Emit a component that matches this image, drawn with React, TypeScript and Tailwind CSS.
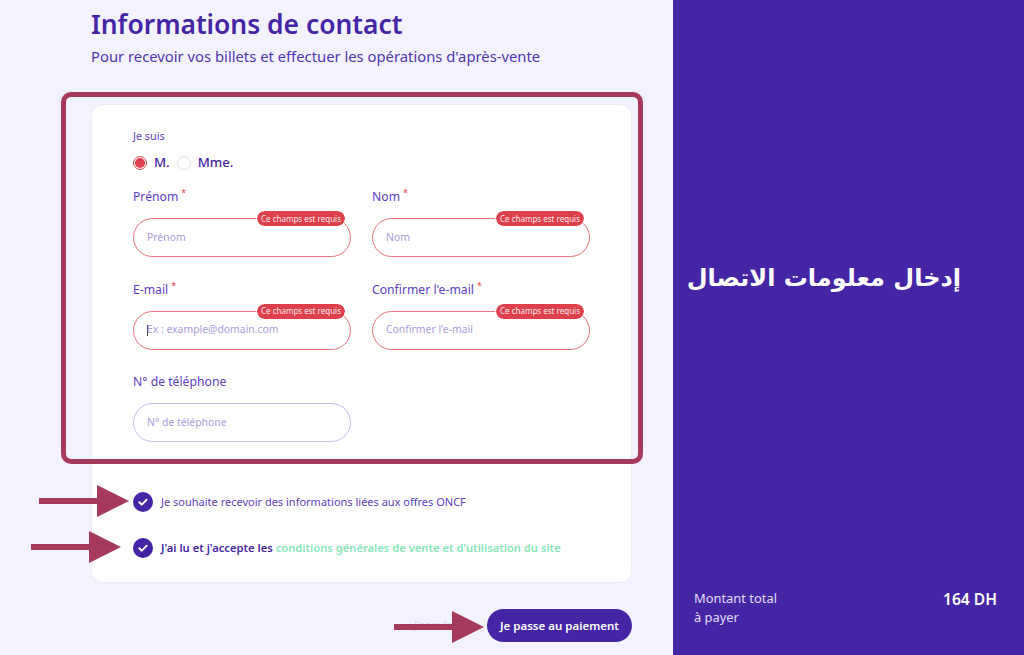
import React from "react";

const FONT = "font-['Noto_Sans',sans-serif]";

function Req() {
  return <span className="relative -top-[5px] ml-[3px] text-[9px] text-[#e0434f]">*</span>;
}

function Field({ label, placeholder, required, cursor }: { label: string; placeholder: string; required?: boolean; cursor?: boolean }) {
  return (
    <div className="w-[218px]">
      <div className="h-[20px] text-[12.2px] leading-[20px] text-[#5f3dc4]">
        {label}
        {required && <Req />}
      </div>
      <div className={`relative mt-[11px] flex h-[39px] items-center rounded-[20px] border-[1.5px] bg-white pl-[13px] text-[10.4px] text-[#a99be0] ${required ? "border-[#e8737b]" : "border-[#c5bcec]"}`}>
        {cursor && <span className="mr-[-1px] h-[11px] w-px bg-[#444]" />}
        {placeholder}
        {required && (
          <span className="absolute -top-[8px] right-[5px] flex h-[15px] items-center rounded-[8px] bg-[#dd3f4b] px-[4px] text-[8px] whitespace-nowrap text-[#fde8e9] outline-1 outline-white">
            Ce champs est requis
          </span>
        )}
      </div>
    </div>
  );
}

function Check({ children }: { children: React.ReactNode }) {
  return (
    <div className="flex h-[20px] items-center gap-[7px] text-[11.2px] whitespace-nowrap">
      <svg width="20" height="20" viewBox="0 0 20 20" className="shrink-0">
        <circle cx="10" cy="10" r="10" fill="#4525a5" />
        <path d="M6.3 10.2l2.6 2.5 4.8-5" fill="none" stroke="#fff" strokeWidth="1.9" strokeLinecap="round" strokeLinejoin="round" />
      </svg>
      {children}
    </div>
  );
}

function Arrow({ className }: { className: string }) {
  return (
    <svg width="90" height="34" viewBox="0 0 90 34" className={`absolute ${className}`}>
      <path d="M0 14H58V1L90 17L58 33V20H0Z" fill="#a63a5c" />
    </svg>
  );
}

export default function App() {
  return (
    <div className={`${FONT} flex h-[655px] w-[1024px] overflow-hidden bg-[#f4f2fe]`}>
      <main className="relative w-[673px] shrink-0 pt-[7px] pl-[91px]">
        <h1 className="text-[26.4px] leading-[34px] font-semibold text-[#4525a5]">Informations de contact</h1>
        <p className="mt-[5px] text-[14.8px] leading-[20px] text-[#5035b0]">Pour recevoir vos billets et effectuer les opérations d'après-vente</p>

        <section className="mt-[38px] h-[479px] w-[541px] rounded-[12px] border border-[#ecebf5] bg-white pt-[24px] pl-[41px]">
          <div className="text-[10.8px] leading-[14px] text-[#5f3dc4]">Je suis</div>
          <div className="mt-[11px] flex h-[18px] items-center text-[13.2px] font-medium text-[#4525a5]">
            <span className="flex h-[14px] w-[14px] items-center justify-center rounded-full border border-[#e0434f]">
              <span className="h-[10px] w-[10px] rounded-full bg-[#e0434f]" />
            </span>
            <span className="ml-[7px]">M.</span>
            <span className="ml-[7px] h-[14px] w-[14px] rounded-full border border-[#dedde8]" />
            <span className="ml-[7px]">Mme.</span>
          </div>

          <div className="mt-[15px] grid w-[456px] grid-cols-[218px_217px] gap-x-[21px] gap-y-[22.5px]">
            <Field label="Prénom" placeholder="Prénom" required />
            <Field label="Nom" placeholder="Nom" required />
            <Field label="E-mail" placeholder="Ex : example@domain.com" required cursor />
            <Field label="Confirmer l'e-mail" placeholder="Confirmer l'e-mail" required />
            <Field label="N° de téléphone" placeholder="N° de téléphone" />
          </div>

          <div className="mt-[50px] flex flex-col gap-[26px]">
            <Check><span className="ml-px text-[11px] text-[#5f3dc4]">Je souhaite recevoir des informations liées aux offres ONCF</span></Check>
            <Check>
              <span className="ml-px font-semibold text-[#4525a5]">J'ai lu et j'accepte les</span>
              <span className="-ml-[4px] font-semibold text-[#86e6b8]">conditions générales de vente et d'utilisation du site</span>
            </Check>
          </div>
        </section>

        <div className="mt-[26px] flex w-[541px] items-center justify-end">
          <span className="mr-[34px] text-[10.5px] text-[#d5cff0]">J'annule</span>
          <button className="h-[33px] w-[145px] rounded-[17px] bg-[#4525a5] text-[11.5px] font-semibold text-white">Je passe au paiement</button>
        </div>

        <div className="absolute top-[92px] left-[61px] h-[372px] w-[582px] rounded-[10px] border-[5px] border-[#a63a5c]" />
        <Arrow className="top-[484px] left-[39px]" />
        <Arrow className="top-[530px] left-[31px]" />
        <Arrow className="top-[610px] left-[394px]" />
      </main>

      <aside className="flex w-[351px] flex-col justify-between bg-[#4525a5] pt-[258px] pr-[27px] pb-[28px] pl-[21px] text-white">
        <div dir="rtl" className="mr-[36px] font-['DejaVu_Sans',sans-serif] text-[24px] leading-[40px] font-bold whitespace-nowrap">
          إدخال معلومات الاتصال
        </div>
        <div className="flex items-start justify-between">
          <div className="text-[12.9px] leading-[19px] text-[#e2dcf7]">
            Montant total
            <br />à payer
          </div>
          <div className="text-[15.6px] leading-[20px] font-semibold">164 DH</div>
        </div>
      </aside>
    </div>
  );
}
